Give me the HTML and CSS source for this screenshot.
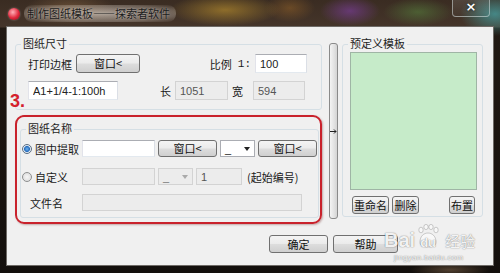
FILE: index.html
```html
<!DOCTYPE html>
<html lang="zh-CN">
<head>
    <meta charset="UTF-8">
    <title>制作图纸模板——探索者软件</title>
    <link rel="stylesheet" href="styles.css">
</head>
<body>
    <div class="window">
        <div class="titlebar">
            <span class="app-icon"></span>
            <span class="title">制作图纸模板——探索者软件</span>
            <span class="close">×</span>
        </div>
        <div class="client">
            <div class="main">
                <div class="left">
                    <!-- paper size -->
                    <div class="group size-group">
                        <div class="group-title">图纸尺寸</div>
                        <div class="row row-first">
                            <span class="lbl lbl-wide">打印边框</span>
                            <button class="btn btn-window">窗口&lt;</button>
                            <span class="lbl push">比例</span>
                            <span class="lbl ratio">1:</span>
                            <input class="field w52" value="100">
                        </div>
                        <div class="row row-second">
                            <input class="field w90" value="A1+1/4-1:100h">
                            <span class="lbl len">长</span>
                            <input class="field off w53" value="1051" disabled>
                            <span class="lbl wid">宽</span>
                            <input class="field off w52 gap10" value="594" disabled>
                        </div>
                    </div>

                    <div class="mark">3.</div>

                    <!-- paper name, circled in red -->
                    <div class="highlight">
                        <div class="group name-group">
                            <div class="group-title">图纸名称</div>
                            <div class="row row-a">
                                <span class="opt"><span class="radio on"></span>图中提取</span>
                                <input class="field w73" value="">
                                <button class="btn btn-small">窗口&lt;</button>
                                <span class="combo"><span>_</span><span class="caret"></span></span>
                                <button class="btn btn-small">窗口&lt;</button>
                            </div>
                            <div class="row row-b">
                                <span class="opt"><span class="radio"></span>自定义</span>
                                <input class="field off w73" value="" disabled>
                                <span class="combo combo-off"><span>_</span><span class="caret"></span></span>
                                <input class="field off w46" value="1" disabled>
                                <span class="lbl start-no">(起始编号)</span>
                            </div>
                            <div class="row row-c">
                                <span class="opt opt-text">文件名</span>
                                <input class="field off w220" value="" disabled>
                            </div>
                        </div>
                    </div>
                </div>

                <div class="splitter">
                    <svg width="7" height="5" viewBox="0 0 7 5"><path d="M0 2.5H6M4 0.5L6 2.5L4 4.5" stroke="#222" stroke-width="1" fill="none"/></svg>
                </div>

                <div class="group tpl-group">
                    <div class="group-title">预定义模板</div>
                    <div class="tpl-list"></div>
                    <div class="tpl-buttons">
                        <button class="btn w37">重命名</button>
                        <button class="btn w27">删除</button>
                        <button class="btn w26 place">布置</button>
                    </div>
                </div>
            </div>

            <div class="actions">
                <button class="btn w59">确定</button>
                <button class="btn w65">帮助</button>
            </div>

            <div class="watermark">
                <div class="wm-logo">
                    <span class="wm-bai">Bai</span>
                    <span class="wm-du">
                        <svg class="paw" width="24" height="24" viewBox="0 0 24 24">
                            <ellipse cx="5" cy="6" rx="2.2" ry="2.8" />
                            <ellipse cx="10" cy="3" rx="2.2" ry="2.6" />
                            <ellipse cx="15" cy="3" rx="2.2" ry="2.6" />
                            <ellipse cx="20" cy="6" rx="2.2" ry="2.8" />
                            <path d="M4 18 C4 12 8 9 12 9 C16 9 20 12 20 18 C20 22 16 23 12 23 C8 23 4 22 4 18Z" />
                        </svg>
                        <span class="du">du</span>
                    </span>
                    <span class="wm-cn">经验</span>
                </div>
                <div class="wm-url">jingyan.baidu.com</div>
            </div>
        </div>
    </div>
</body>
</html>
```

FILE: styles.css
```css
* {
    margin: 0;
    padding: 0;
    box-sizing: border-box;
}
body {
    font-family: "Noto Sans CJK SC", sans-serif;
    font-size: 11px;
    color: #1a1a1a;
    background: #1a1410;
}
.window {
    width: 500px;
    height: 273px;
    padding: 0 7px 8px;
    display: flex;
    flex-direction: column;
    background:
        radial-gradient(ellipse 45px 16px at 70px 9px, rgba(140, 105, 70, 0.55), transparent),
        radial-gradient(ellipse 55px 16px at 225px 10px, rgba(175, 135, 45, 0.7), transparent),
        radial-gradient(ellipse 25px 14px at 290px 8px, rgba(150, 100, 40, 0.5), transparent),
        radial-gradient(ellipse 30px 15px at 350px 11px, rgba(115, 60, 140, 0.75), transparent),
        radial-gradient(ellipse 35px 14px at 418px 12px, rgba(85, 125, 60, 0.6), transparent),
        radial-gradient(ellipse 35px 22px at 495px 14px, rgba(70, 150, 150, 0.85), transparent),
        radial-gradient(ellipse 40px 8px at 450px 270px, rgba(120, 95, 70, 0.6), transparent),
        linear-gradient(#3a2c22, #45352a 27px, #211913 28px, #130f0c);
}

/* title bar */
.titlebar {
    height: 27px;
    display: flex;
    align-items: flex-start;
}
.app-icon {
    width: 12px;
    height: 12px;
    margin: 8px 0 0 1px;
    border-radius: 50%;
    background: radial-gradient(circle at 40% 35%, #ffb0b8, #e0283c 55%, #8a1020);
    box-shadow: 0 0 2px rgba(255, 255, 255, 0.4);
}
.title {
    margin: 5px 0 0 4px;
    padding: 2px 6px 2px 3px;
    line-height: 13px;
    color: #1c1c1c;
    border-radius: 8px;
    background: radial-gradient(ellipse at center, rgba(215, 205, 195, 0.7), rgba(200, 190, 180, 0.35) 70%, rgba(200, 190, 180, 0) 100%);
    text-shadow: 0 0 2px rgba(255, 255, 255, 0.4);
}
.close {
    margin: -1px 3px 0 auto;
    width: 38px;
    height: 18px;
    border: 1px solid rgba(210, 220, 220, 0.55);
    border-top: none;
    border-radius: 0 0 4px 4px;
    background: linear-gradient(rgba(255, 255, 255, 0.12), rgba(255, 255, 255, 0.03));
    color: #fff;
    font-family: "DejaVu Sans", sans-serif;
    font-weight: bold;
    font-size: 13px;
    line-height: 16px;
    text-align: center;
    text-shadow: 0 0 3px rgba(0, 0, 0, 0.8);
}

/* client area */
.client {
    position: relative;
    height: 238px;
    padding: 17px 8px 0;
    background: #f0f0f0;
    box-shadow: 0 0 0 1px #6e6a66;
}
.main {
    display: flex;
    align-items: flex-start;
}
.left {
    width: 307px;
}

/* group boxes */
.group {
    border: 1px solid #d5dfe5;
    border-radius: 3px;
}
.group-title {
    display: table;
    margin: -8px 0 0 5px;
    padding: 0 2px;
    line-height: 13px;
    background: #f0f0f0;
    color: #1e1e1e;
}
.size-group {
    padding: 0 14px 9px 12px;
}
.size-group .group-title {
    margin-left: -7px;
}
.row {
    display: flex;
    align-items: center;
}
.row-first {
    height: 19px;
    margin-top: 4px;
}
.row-second {
    height: 19px;
    margin-top: 8px;
}
.lbl {
    white-space: nowrap;
}
.lbl-wide {
    width: 48px;
}
.push {
    margin-left: auto;
}
.ratio {
    margin: 0 4px 0 6px;
    font-family: "Liberation Mono", monospace;
    font-size: 11px;
}
.len {
    margin-left: 42px;
}
.wid {
    margin-left: 4px;
}
.len + .field {
    margin-left: 4px;
}
.gap10 {
    margin-left: 10px;
}

/* inputs */
.field {
    height: 19px;
    padding: 0 4px;
    border: 1px solid #abadb3;
    border-color: #abadb3 #dbdfe6 #e3e9ef #e2e3ea;
    background: #fff;
    font-family: "Liberation Sans", "Noto Sans CJK SC", sans-serif;
    font-size: 11px;
    color: #222;
    outline: none;
}
.field.off,
.field:disabled {
    background: #ececec;
    border-color: #d3d3d3;
    color: #555;
}
.w46 { width: 46px; }
.w52 { width: 52px; }
.w53 { width: 53px; }
.w73 { width: 73px; }
.w90 { width: 90px; }
.w220 { width: 220px; }

/* buttons */
.btn {
    height: 18px;
    border: 1px solid #707070;
    border-radius: 3px;
    background: linear-gradient(#f4f4f4, #ebebeb 48%, #dddddd 52%, #cfcfcf);
    font-family: "Noto Sans CJK SC", sans-serif;
    font-size: 11px;
    line-height: 15px;
    color: #111;
    padding: 0;
    flex: none;
}
.btn-window {
    width: 64px;
    height: 19px;
}
.btn-small {
    width: 59px;
    height: 17px;
    margin-left: 3px;
}
.w26 { width: 26px; }
.w27 { width: 27px; }
.w37 { width: 37px; }
.w59 { width: 59px; }
.w65 { width: 65px; }

/* red annotation */
.mark {
    position: absolute;
    left: 3px;
    top: 65px;
    font-family: "Liberation Sans", sans-serif;
    font-weight: bold;
    font-size: 18px;
    line-height: 18px;
    color: #d4202c;
}
.highlight {
    margin-top: 5px;
    border: 2px solid #c9222c;
    border-radius: 9px;
    box-shadow: 1px 1px 2px rgba(90, 0, 0, 0.3);
    padding: 12px 1px 4px 3px;
}
.name-group {
    padding: 0 0 6px 0;
}
.row-a {
    height: 17px;
    margin-top: 5px;
}
.row-b {
    height: 17px;
    margin-top: 11px;
}
.row-c {
    height: 17px;
    margin-top: 9px;
}
.row-a .field,
.row-b .field,
.row-c .field {
    height: 17px;
}
.opt {
    width: 61px;
    display: flex;
    align-items: center;
    gap: 3px;
    padding-left: 1px;
    white-space: nowrap;
}
.opt-text {
    padding-left: 9px;
}
.radio {
    width: 10px;
    height: 10px;
    flex: none;
    border-radius: 50%;
    border: 1px solid #8e8f8f;
    background: radial-gradient(circle, #f6f6f6, #d8d8d8);
}
.radio.on {
    border-color: #5c6f82;
    background: radial-gradient(circle, #6db2f0 0, #2a6fbd 2.6px, #dfe8f2 3.4px, #f2f5f8);
}
.combo {
    width: 35px;
    height: 17px;
    margin-left: 3px;
    display: flex;
    align-items: center;
    justify-content: space-between;
    padding: 0 4px 0 4px;
    border: 1px solid #abadb3;
    background: #fff;
    font-family: "Liberation Sans", sans-serif;
    color: #222;
    flex: none;
}
.caret {
    width: 0;
    height: 0;
    border-left: 3.5px solid transparent;
    border-right: 3.5px solid transparent;
    border-top: 4px solid #222;
}
.combo-off {
    width: 35px;
    border-color: #d3d3d3;
    background: #ececec;
    color: #777;
}
.combo-off .caret {
    border-top-color: #aaa;
}
.row-b .w46 {
    margin-left: 3px;
}
.start-no {
    margin-left: 5px;
}

/* splitter between the columns */
.splitter {
    width: 9px;
    height: 176px;
    margin: -1px 0 0 7px;
    border: 1px solid #8a8a8a;
    border-radius: 3px;
    background: linear-gradient(90deg, #f4f4f4, #e2e2e2 60%, #d4d4d4);
    display: flex;
    align-items: center;
    justify-content: center;
}

/* template list */
.tpl-group {
    width: 141px;
    margin-left: 4px;
    padding-bottom: 2px;
}
.tpl-list {
    width: 127px;
    height: 138px;
    margin: 2px 0 0 7px;
    border: 1px solid #9fb5a5;
    background: #c6ebc9;
}
.tpl-buttons {
    display: flex;
    gap: 3px;
    margin-top: 6px;
    padding: 0 7px 0 9px;
}
.tpl-buttons .place {
    margin-left: auto;
}

/* dialog buttons */
.actions {
    display: flex;
    margin: 11px 0 0 254px;
    gap: 5px;
}

/* watermark */
.watermark {
    position: absolute;
    left: 377px;
    top: 195px;
    color: rgba(255, 255, 255, 0.92);
    text-shadow: 0 0 1px rgba(0, 0, 0, 0.45), 0 0 2px rgba(0, 0, 0, 0.2);
}
.wm-logo {
    display: flex;
    align-items: flex-end;
    height: 28px;
}
.wm-bai {
    font-family: "Liberation Sans", sans-serif;
    font-weight: bold;
    font-size: 20px;
    line-height: 20px;
}
.wm-du {
    position: relative;
    width: 24px;
    height: 26px;
    margin-left: 1px;
    display: flex;
    align-items: flex-end;
    justify-content: center;
}
.paw {
    position: absolute;
    left: 0;
    top: 0;
    fill: rgba(255, 255, 255, 0.5);
    stroke: rgba(120, 120, 120, 0.45);
    stroke-width: 0.8;
}
.du {
    position: relative;
    font-family: "Liberation Sans", sans-serif;
    font-weight: bold;
    font-size: 13px;
    line-height: 14px;
}
.wm-cn {
    margin-left: 5px;
    font-size: 15px;
    line-height: 18px;
}
.wm-url {
    margin: 3px 0 0 10px;
    font-family: "Liberation Sans", sans-serif;
    font-size: 8px;
    line-height: 9px;
    letter-spacing: 0.3px;
}
```
